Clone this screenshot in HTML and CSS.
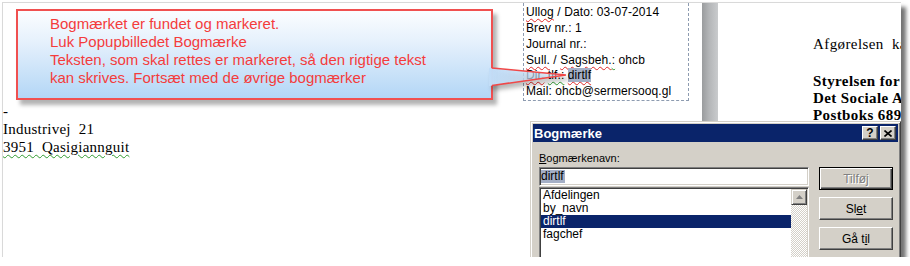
FILE: index.html
```html
<!DOCTYPE html>
<html lang="da">
<head>
    <meta charset="UTF-8">
    <meta name="viewport" content="width=device-width, initial-scale=1.0">
    <title>Bogmærke</title>
    <link rel="stylesheet" href="styles.css">
</head>
<body>
    <div class="screen">
        <div class="doc">
            <div class="page-left">
                <p>-</p>
                <p>Industrivej&nbsp; 21</p>
                <p><span class="grammar">3951&nbsp; Qasigiannguit</span></p>
            </div>

            <div class="textbox">
                <p><span class="spell">Ullog</span> / Dato: 03-07-2014</p>
                <p>Brev nr.: 1</p>
                <p>Journal nr.:</p>
                <p><span class="spell">Sull.</span> / <span class="spell">Sagsbeh.</span><span class="grammar">:</span> ohcb</p>
                <p><span class="spell">Dir.</span> <span class="grammar">tlf.:</span> <span class="selected spell">dirtlf</span></p>
                <p>Mail: ohcb@sermersooq.gl</p>
            </div>

            <div class="page-gap"></div>
            <div class="page-sep"></div>

            <div class="page-right">
                <p class="intro">Afgørelsen&nbsp; ka</p>
                <p class="strong">Styrelsen for</p>
                <p class="strong">Det Sociale A</p>
                <p class="strong">Postboks 689</p>
            </div>
        </div>

        <div class="callout">
            <p>Bogmærket er fundet og markeret.</p>
            <p>Luk Popupbilledet Bogmærke</p>
            <p>Teksten, som skal rettes er markeret, så den rigtige tekst</p>
            <p>kan skrives. Fortsæt med de øvrige bogmærker</p>
        </div>
        <svg class="callout-tail" width="92" height="36" viewBox="0 0 92 36">
            <defs>
                <linearGradient id="tailFill" x1="0" y1="0" x2="1" y2="0">
                    <stop offset="0" stop-color="#c2ddf7" stop-opacity="1"/>
                    <stop offset="0.25" stop-color="#c2ddf7" stop-opacity="0.9"/>
                    <stop offset="1" stop-color="#c8e1f8" stop-opacity="0.4"/>
                </linearGradient>
            </defs>
            <polygon points="9,8 86,15 9,26" fill="url(#tailFill)"/>
            <polyline points="12,8 86,15 12,25.5" fill="none" stroke="#f04848" stroke-width="1.5"/>
        </svg>

        <div class="dialog">
            <div class="titlebar">
                <span class="title">Bogmærke</span>
                <div class="title-buttons">
                    <span class="tbtn help">?</span>
                    <span class="tbtn">
                        <svg width="8" height="7" viewBox="0 0 8 7"><path d="M0.5 0.5 L7.5 6.5 M7.5 0.5 L0.5 6.5" stroke="#000" stroke-width="1.6"/></svg>
                    </span>
                </div>
            </div>
            <div class="dialog-body">
                <div class="left-col">
                    <div class="label"><u>B</u>ogmærkenavn:</div>
                    <div class="field"><span class="field-sel">dirtlf</span></div>
                    <div class="listbox">
                        <div class="items">
                            <div class="item">Afdelingen</div>
                            <div class="item">by_navn</div>
                            <div class="item active">dirtlf</div>
                            <div class="item">fagchef</div>
                        </div>
                        <div class="scrollbar">
                            <div class="scroll-up">
                                <svg width="7" height="4" viewBox="0 0 7 4"><polygon points="3.5,0 7,4 0,4" fill="#808080"/></svg>
                            </div>
                            <div class="scroll-track"></div>
                        </div>
                    </div>
                </div>
                <div class="right-col">
                    <div class="btn default disabled">Tilføj</div>
                    <div class="btn">Sl<u>e</u>t</div>
                    <div class="btn">Gå t<u>i</u>l</div>
                </div>
            </div>
        </div>
    </div>
</body>
</html>
```

FILE: styles.css
```css
body {
    margin: 0;
    background: #fff;
    font-family: "Liberation Sans", Arial, sans-serif;
}
p {
    margin: 0;
}
.screen {
    position: relative;
    width: 899px;
    height: 255px;
    margin: 2px 0 0 2px;
    box-sizing: border-box;
    border-top: 1px solid #d9d9d9;
    border-left: 1px solid #d9d9d9;
    background: #fff;
    overflow: hidden;
    box-shadow: 5px 5px 4px rgba(0, 0, 0, 0.55);
}
.doc {
    display: flex;
    height: 100%;
}
.page-left {
    flex-shrink: 0;
    width: 520px;
    padding-top: 99px;
    font-family: "Liberation Serif", "Times New Roman", serif;
    font-size: 15px;
    line-height: 18px;
    letter-spacing: 0.25px;
    color: #000;
}
.textbox {
    flex-shrink: 0;
    align-self: flex-start;
    width: 166px;
    height: 98px;
    box-sizing: border-box;
    padding: 2px 0 0 2px;
    border: 1px dashed #8d9bb0;
    border-top: none;
    font-size: 12px;
    line-height: 15.85px;
    letter-spacing: 0.1px;
    color: #000;
    white-space: nowrap;
}
.spell {
    text-decoration: underline wavy #e02828;
    text-decoration-thickness: 1px;
    text-underline-offset: 2px;
}
.grammar {
    text-decoration: underline wavy #2f9a2f;
    text-decoration-thickness: 1px;
    text-underline-offset: 2px;
}
.selected {
    background: #a4afc6;
}
.page-gap {
    flex-shrink: 0;
    width: 13px;
}
.page-sep {
    flex-shrink: 0;
    width: 16px;
    background: linear-gradient(to right, #9a9c9e, #b4b6b8 45%, #c9cbcd);
}
.page-right {
    flex: 1;
    min-width: 0;
    padding: 33px 0 0 95px;
    font-family: "Liberation Serif", "Times New Roman", serif;
    font-size: 15px;
    line-height: 17px;
    letter-spacing: 0.4px;
    white-space: nowrap;
    color: #000;
}
.page-right .intro {
    margin-bottom: 20px;
}
.page-right .strong {
    font-weight: bold;
}

/* callout */
.callout {
    position: absolute;
    left: 13px;
    top: 6px;
    width: 477px;
    height: 91px;
    box-sizing: border-box;
    padding: 4px 0 0 32px;
    border: 2px solid #f05050;
    background: linear-gradient(#fbfdff, #e6f1fc 35%, #b3d6f6);
    box-shadow: 4px 5px 4px rgba(0, 0, 0, 0.3);
    color: #f43c3c;
    font-size: 15px;
    line-height: 18px;
    white-space: nowrap;
}
.callout-tail {
    position: absolute;
    left: 477px;
    top: 57px;
    overflow: visible;
    filter: drop-shadow(3px 4px 2px rgba(0, 0, 0, 0.3));
}

/* dialog */
.dialog {
    position: absolute;
    left: 527px;
    top: 118px;
    width: 371px;
    height: 150px;
    box-sizing: border-box;
    padding: 2px;
    background: #d4d0c8;
    border: 1px solid;
    border-color: #d4d0c8 #404040 #404040 #d4d0c8;
    box-shadow: inset 1px 1px #fff, inset -1px -1px #808080;
    font-size: 11px;
    color: #000;
}
.titlebar {
    display: flex;
    align-items: center;
    justify-content: space-between;
    height: 18px;
    padding: 0 2px 0 1px;
    background: #0a246a;
}
.title {
    color: #fff;
    font-weight: bold;
    font-size: 13px;
}
.title-buttons {
    display: flex;
    gap: 2px;
}
.tbtn {
    display: flex;
    align-items: center;
    justify-content: center;
    width: 16px;
    height: 14px;
    box-sizing: border-box;
    background: #d4d0c8;
    border: 1px solid;
    border-color: #fff #404040 #404040 #fff;
    box-shadow: inset -1px -1px #808080;
}
.tbtn.help {
    font-weight: bold;
    font-size: 12px;
    line-height: 12px;
}
.dialog-body {
    display: flex;
    gap: 10px;
    padding: 10px 5px 0 6px;
}
.left-col {
    width: 270px;
}
.label {
    line-height: 13px;
    margin-bottom: 2px;
}
.field {
    height: 19px;
    box-sizing: border-box;
    padding: 1px 0 0 1px;
    background: #fff;
    border: 1px solid;
    border-color: #808080 #fff #fff #808080;
    box-shadow: inset 1px 1px #404040, inset -1px -1px #d4d0c8;
    line-height: 13px;
    font-size: 12px;
}
.field-sel {
    display: inline-block;
    margin-top: 1px;
    padding-right: 1px;
    background: #a4afc6;
}
.listbox {
    display: flex;
    height: 80px;
    margin-top: 1px;
    box-sizing: border-box;
    background: #fff;
    border: 1px solid;
    border-color: #808080 #fff #fff #808080;
    box-shadow: inset 1px 1px #404040, inset -1px -1px #d4d0c8;
    padding: 1px;
}
.items {
    flex: 1;
    font-size: 12px;
}
.item {
    height: 13px;
    line-height: 13px;
    padding-left: 2px;
}
.item.active {
    background: #0a246a;
    color: #fff;
}
.scrollbar {
    display: flex;
    flex-direction: column;
    width: 16px;
}
.scroll-up {
    display: flex;
    align-items: center;
    justify-content: center;
    height: 16px;
    box-sizing: border-box;
    background: #d4d0c8;
    border: 1px solid;
    border-color: #d4d0c8 #404040 #404040 #d4d0c8;
    box-shadow: inset 1px 1px #fff, inset -1px -1px #808080;
}
.scroll-track {
    flex: 1;
    background: repeating-conic-gradient(#d4d0c8 0 25%, #fff 0 50%) 0 0 / 2px 2px;
}
.right-col {
    display: flex;
    flex-direction: column;
    gap: 7px;
    padding-top: 15px;
}
.btn {
    display: flex;
    align-items: center;
    justify-content: center;
    width: 74px;
    height: 23px;
    box-sizing: border-box;
    border: 1px solid;
    border-color: #fff #404040 #404040 #fff;
    box-shadow: inset -1px -1px #808080;
    font-size: 12px;
}
.btn.default {
    border-color: #000;
    box-shadow: inset 1px 1px #fff, inset -1px -1px #404040, inset -2px -2px #808080;
}
.btn.disabled {
    color: #808080;
    text-shadow: 1px 1px #fff;
}
```
